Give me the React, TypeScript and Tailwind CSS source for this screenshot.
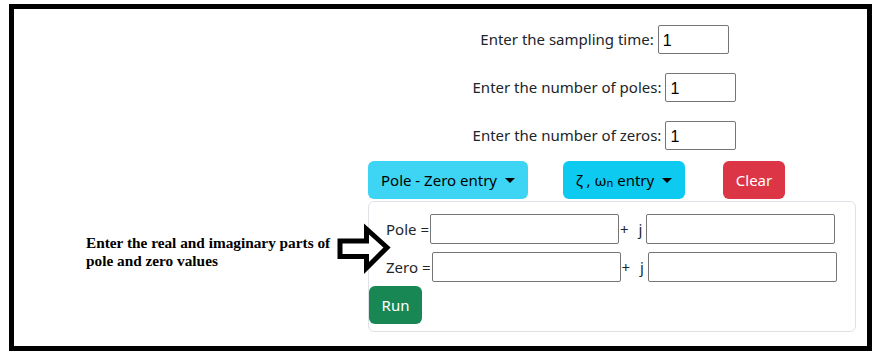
import React from "react";

const sans = { fontFamily: '"Noto Sans", "Open Sans", sans-serif' };

function Caret() {
  return (
    <span className="ml-[8px] inline-block w-0 h-0 border-l-[5px] border-r-[5px] border-t-[5px] border-l-transparent border-r-transparent border-t-black align-middle" />
  );
}

function Field({ w }: { w: string }) {
  return (
    <input
      defaultValue=""
      className={`${w} h-[30px] border border-[#767676] rounded-[2px] bg-white outline-none`}
    />
  );
}

function NumRow({ label }: { label: string }) {
  return (
    <div className="flex items-center justify-center h-[29px]">
      <span className="text-[15px] text-[#212529] mr-[4px]">{label}</span>
      <input
        defaultValue="1"
        className="w-[71px] h-[29px] border border-[#767676] rounded-[2px] pl-[4px] pt-[3px] text-[16px] text-black bg-white outline-none"
        style={{ fontFamily: '"Liberation Sans", Arial, sans-serif' }}
      />
    </div>
  );
}

export default function App() {
  return (
    <div className="bg-white w-[879px] h-[356px] pl-[9px] pt-[4px]" style={sans}>
      <div className="relative w-[863px] h-[347px] border-[5px] border-black flex">
        <div className="w-[354px] shrink-0 pl-[72px] pt-[225px]">
          <p
            className="font-bold text-[15.3px] leading-[18px] text-black"
            style={{ fontFamily: '"Liberation Serif", "Times New Roman", serif' }}
          >
            Enter the real and imaginary parts of
            <br />
            pole and zero values
          </p>
        </div>
        <div className="w-[488px] shrink-0 pt-[16px]">
          <div className="flex flex-col gap-[19px] pr-[15px]">
            <NumRow label="Enter the sampling time:" />
            <NumRow label="Enter the number of poles:" />
            <NumRow label="Enter the number of zeros:" />
          </div>
          <div className="flex mt-[11px] h-[38px] text-[15px]">
            <button className="w-[160px] h-[38px] rounded-[6px] bg-[#3dd5f3] text-black flex items-center justify-center">
              Pole - Zero entry
              <Caret />
            </button>
            <button className="ml-[35px] w-[122px] h-[38px] rounded-[6px] bg-[#0dcaf0] text-black flex items-center justify-center">
              ζ , ω<sub className="text-[11px] relative top-[3px]">n</sub>
              <span>&nbsp;entry</span>
              <Caret />
            </button>
            <button className="ml-[38px] w-[62px] h-[38px] rounded-[6px] bg-[#dc3545] text-white">
              Clear
            </button>
          </div>
          <div className="mt-[2px] w-[488px] h-[131px] border border-[#dee2e6] rounded-[6px] flex flex-col text-[15px]">
            <div className="flex items-center pl-[17px] mt-[12px] text-[#212529]">
              <span className="mr-[1px]">Pole =</span>
              <Field w="w-[189px]" />
              <span className="ml-[1px]">+</span>
              <span className="ml-[10px] mr-[4px]">j</span>
              <Field w="w-[189px]" />
            </div>
            <div className="flex items-center pl-[17px] mt-[8px] text-[#212529]">
              <span className="mr-[1px]">Zero =</span>
              <Field w="w-[189px]" />
              <span className="ml-[1px]">+</span>
              <span className="ml-[10px] mr-[4px]">j</span>
              <Field w="w-[189px]" />
            </div>
            <button className="mt-[4px] ml-0 w-[53px] h-[38px] rounded-[6px] bg-[#198754] text-white">
              Run
            </button>
          </div>
        </div>
        <svg
          className="absolute left-[316px] top-[211px]"
          width="70"
          height="60"
          viewBox="0 0 70 60"
        >
          <polygon
            points="10,21 36.5,21 36.5,9 57,27.5 36.5,48 36.5,36.5 10,36.5"
            fill="white"
            stroke="black"
            strokeWidth="5"
            strokeLinejoin="miter"
          />
        </svg>
      </div>
    </div>
  );
}
